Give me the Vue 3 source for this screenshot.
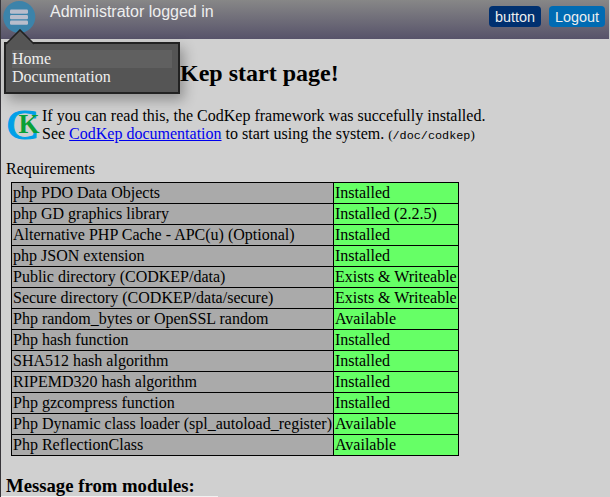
<script setup>
const rows = [
  ['php PDO Data Objects', 'Installed'],
  ['php GD graphics library', 'Installed (2.2.5)'],
  ['Alternative PHP Cache - APC(u) (Optional)', 'Installed'],
  ['php JSON extension', 'Installed'],
  ['Public directory (CODKEP/data)', 'Exists & Writeable'],
  ['Secure directory (CODKEP/data/secure)', 'Exists & Writeable'],
  ['Php random_bytes or OpenSSL random', 'Available'],
  ['Php hash function', 'Installed'],
  ['SHA512 hash algorithm', 'Installed'],
  ['RIPEMD320 hash algorithm', 'Installed'],
  ['Php gzcompress function', 'Installed'],
  ['Php Dynamic class loader (spl_autoload_register)', 'Available'],
  ['Php ReflectionClass', 'Available'],
]
</script>

<template>
  <div class="page">
    <header class="bar">
      <div class="menu-anchor">
        <svg class="burger" width="34" height="34" viewBox="0 0 34 34">
          <circle cx="16.3" cy="17" r="16" fill="#3c83aa" />
          <g fill="#b9bdcb">
            <rect x="7" y="9.5" width="18" height="4.2" rx="1.2" />
            <rect x="7" y="15" width="18" height="4.2" rx="1.2" />
            <rect x="7" y="20.5" width="18" height="4.2" rx="1.2" />
          </g>
        </svg>
        <nav class="menu">
          <svg class="tip" width="30" height="16" viewBox="0 0 30 16">
            <path d="M1 16V15L15 1L29 15V16Z" fill="#555" />
            <path d="M1 15L15 1L29 15" fill="none" stroke="#222" stroke-width="1.6" />
          </svg>
          <a class="item active">Home</a>
          <a class="item">Documentation</a>
        </nav>
      </div>
      <span class="user">Administrator logged in</span>
      <span class="btn dark">button</span>
      <span class="btn">Logout</span>
    </header>
    <main class="content">
      <h1>Kep start page!</h1>
      <section class="intro">
        <svg class="logo" width="32" height="32" viewBox="0 0 32 32">
          <text class="c" x="0.6" y="30.6" textLength="32" lengthAdjust="spacingAndGlyphs">C</text>
          <text class="k" x="12.6" y="25" textLength="21" lengthAdjust="spacingAndGlyphs">K</text>
        </svg>
        <div>
          If you can read this, the CodKep framework was succefully installed.<br />
          See <a class="link">CodKep documentation</a> to start using the system.
          <small>(<code>/doc/codkep</code>)</small>
        </div>
      </section>
      <div class="label">Requirements</div>
      <table>
        <tbody>
          <tr v-for="row in rows" :key="row[0]">
            <td class="name">{{ row[0] }}</td>
            <td class="state">{{ row[1] }}</td>
          </tr>
        </tbody>
      </table>
      <h2>Message from modules:</h2>
      <div class="strip"></div>
    </main>
  </div>
</template>

<style>
body {
  margin: 0;
  overflow: hidden;
  background: #d0d0d0;
}
</style>

<style scoped>
.page {
  box-sizing: border-box;
  width: 609px;
  height: 497px;
  overflow: hidden;
  border-left: 1px solid #363439;
  background: #d0d0d0;
  color: #000;
  font: 16px/18px "Liberation Serif", serif;
}
.bar {
  display: flex;
  align-items: flex-start;
  box-sizing: border-box;
  height: 39px;
  padding: 0 4px 0 2px;
  background: linear-gradient(#878787, #57536a);
  font: 16px/18px "Liberation Sans", sans-serif;
  color: #eee;
}
.menu-anchor {
  position: relative;
  width: 34px;
  height: 34px;
}
.burger {
  display: block;
}
.menu {
  position: absolute;
  z-index: 2;
  left: 1px;
  top: 42px;
  box-sizing: border-box;
  width: 176px;
  height: 52px;
  padding: 6px;
  border: 2px solid #222;
  background: #555;
  box-shadow: 4px 6px 12px rgba(0, 0, 0, 0.3);
  font: 16px/18px "Liberation Serif", serif;
}
.tip {
  position: absolute;
  left: -1px;
  top: -15px;
}
.item {
  display: block;
  width: 160px;
  height: 18px;
}
.active {
  background: #606060;
}
.user {
  flex: 1;
  padding: 3px 0 0 13px;
}
.btn {
  box-sizing: border-box;
  height: 21px;
  margin: 6px 0 0 8px;
  padding: 2px 6px 0;
  border-radius: 4px;
  background: #006bb3;
  font-size: 14.4px;
}
.dark {
  background: #003070;
}
.content {
  padding: 20px 5px 0;
}
h1 {
  margin: 0;
  padding-left: 174px;
  font-size: 24px;
  line-height: 28px;
}
.intro {
  display: flex;
  padding-top: 20px;
  gap: 4px;
}
.logo {
  display: block;
  overflow: visible;
  margin-top: 1px;
}
.c {
  font: 43px "Liberation Serif", serif;
  fill: #00a0e8;
  stroke: #00a0e8;
  stroke-width: 1px;
}
.k {
  font: bold 28px "Liberation Serif", serif;
  fill: #08a038;
}
.link {
  color: #00e;
  text-decoration: underline;
}
small {
  font-size: 13px;
}
code {
  font: 11.8px "Liberation Mono", monospace;
}
.label {
  padding-top: 16px;
}
table {
  width: 448px;
  margin: 4px 0 0 5px;
  border-collapse: collapse;
  table-layout: fixed;
}
td {
  box-sizing: border-box;
  height: 21px;
  padding: 1px;
  border: 1px solid #000;
  white-space: nowrap;
}
.name {
  width: 322px;
  background: #aaa;
}
.state {
  background: #66ff66;
}
h2 {
  margin: 0;
  padding-top: 19px;
  font-size: 18.72px;
  line-height: 22px;
}
.strip {
  width: 217px;
  height: 2px;
  margin: -1px 0 0 -5px;
  background: #f2f2f2;
}
</style>
